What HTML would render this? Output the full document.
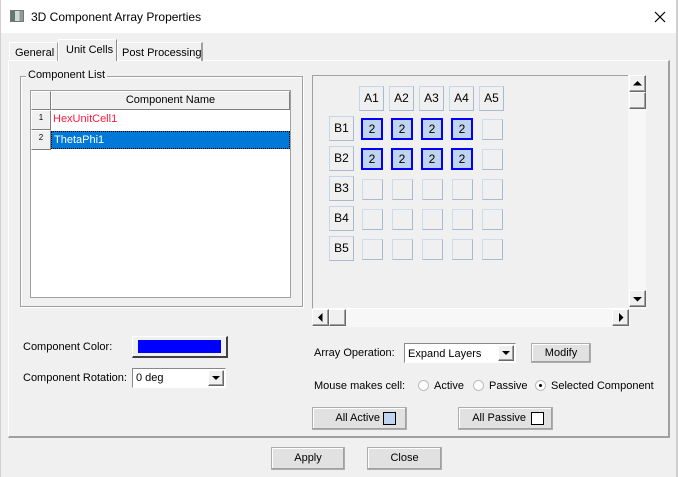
<!DOCTYPE html>
<html><head><style>
*{box-sizing:border-box;margin:0;padding:0}
body{width:678px;height:477px;background:#f0f0f0;font-family:"Liberation Sans",sans-serif;font-size:11px;color:#000;position:relative;overflow:hidden}
div{white-space:nowrap}
.a{position:absolute}
.btn{position:absolute;background:#e1e1e1;border:1px solid #adadad;text-align:center;box-shadow:inset -1px -1px 0 #a0a0a0, inset 1px 1px 0 #fff}
.hd{position:absolute;width:25px;height:25px;border:1px solid #c5d6ea;border-right-color:#a9b9cf;border-bottom-color:#a9b9cf;background:#f0f0f0;text-align:center;line-height:23px;font-size:12px}
.c2{position:absolute;width:22px;height:22px;border:2px solid #0000ff;background:#c0d4ee;text-align:center;line-height:18px;font-size:12px}
.ce{position:absolute;width:21px;height:21px;border:1px solid #cbdcef;border-right-color:#a9b9cf;border-bottom-color:#a9b9cf;background:#f0f0f0}
.radio{position:absolute;width:11px;height:11px;border-radius:50%;border:1px solid #bbb;background:#fff}
.sb{position:absolute;background:#f0f0f0;border:1px solid #fff;border-right-color:#696969;border-bottom-color:#696969;box-shadow:inset -1px -1px 0 #a0a0a0}
</style></head><body>
<div class="a" style="left:0;top:0;width:678px;height:33px;background:#fff"></div>
<div class="a" style="left:676px;top:0;width:2px;height:477px;background:#cfcfcf"></div>
<div class="a" style="left:0;top:0;width:1px;height:477px;background:#cfcfcf"></div>
<div class="a" style="left:10px;top:10px;width:14px;height:12px;border:1px solid #777;background:linear-gradient(90deg,#5f7a6a 0 35%,#cfd8d5 35% 70%,#8a9a9a 70%)"></div>
<div class="a" style="left:31px;top:10px;font-size:12px">3D Component Array Properties</div>
<svg class="a" style="left:654px;top:11px" width="12" height="12"><path d="M1 1L11 11M11 1L1 11" stroke="#000" stroke-width="1.2"/></svg>

<div class="a" style="left:8px;top:60px;width:662px;height:378px;border:1px solid #fff;border-right:2px solid #a0a0a0;border-bottom:2px solid #a0a0a0"></div>
<div class="a" style="left:9px;top:42px;width:49px;height:19px;border:1px solid #fff;border-right:1px solid #a0a0a0;border-bottom:none;padding:4px 0 0 5px">General</div>
<div class="a" style="left:58px;top:39px;width:59px;height:22px;border:1px solid #fff;border-right:1px solid #888;border-bottom:none;background:#f0f0f0;padding:4px 0 0 7px">Unit Cells</div>
<div class="a" style="left:117px;top:42px;width:86px;height:19px;border:1px solid #fff;border-right:2px solid #a0a0a0;border-bottom:none;padding:4px 0 0 4px">Post Processing</div>

<div class="a" style="left:20px;top:76px;width:283px;height:231px;border:1px solid #a0a0a0;box-shadow:1px 1px 0 #fff, inset 1px 1px 0 #fff"></div>
<div class="a" style="left:26px;top:69px;background:#f0f0f0;padding:0 2px">Component List</div>
<div class="a" style="left:30px;top:90px;width:261px;height:208px;background:#fff;border:1px solid #a0a0a0"></div>
<div class="a" style="left:31px;top:91px;width:20px;height:19px;background:#f0f0f0;border:1px solid #fff;border-right-color:#808080;border-bottom-color:#808080"></div>
<div class="a" style="left:51px;top:91px;width:239px;height:19px;background:#f0f0f0;border:1px solid #fff;border-right-color:#808080;border-bottom-color:#808080;text-align:center;line-height:17px">Component Name</div>
<div class="a" style="left:31px;top:110px;width:20px;height:20px;background:#f0f0f0;border:1px solid #fff;border-right-color:#808080;border-bottom-color:#808080;font-size:8px;text-align:center;line-height:14px">1</div>
<div class="a" style="left:31px;top:130px;width:20px;height:20px;background:#f0f0f0;border:1px solid #fff;border-right-color:#808080;border-bottom-color:#808080;font-size:8px;text-align:center;line-height:14px">2</div>
<div class="a" style="left:53px;top:113px;color:#ff1a3c">HexUnitCell1</div>
<div class="a" style="left:51px;top:131px;width:239px;height:18px;background:#0078d7;border:1px dotted #000;color:#fff;padding:2px 0 0 2px">ThetaPhi1</div>

<div class="a" style="left:312px;top:75px;width:317px;height:234px;border:1px solid #a0a0a0;border-right-color:#fff;border-bottom-color:#fff"></div>
<div class="a" style="left:628px;top:75px;width:18px;height:234px;background:#f7f7f7"></div>
<div class="sb" style="left:629px;top:75px;width:17px;height:17px"></div>
<svg class="a" style="left:633px;top:81px" width="9" height="5"><path d="M0 4.5L4.5 0L9 4.5Z"/></svg>
<div class="sb" style="left:629px;top:92px;width:17px;height:17px"></div>
<div class="sb" style="left:629px;top:290px;width:17px;height:17px"></div>
<svg class="a" style="left:633px;top:297px" width="9" height="5"><path d="M0 0L4.5 4.5L9 0Z"/></svg>
<div class="a" style="left:312px;top:309px;width:318px;height:18px;background:#f7f7f7"></div>
<div class="sb" style="left:312px;top:309px;width:17px;height:17px"></div>
<svg class="a" style="left:318px;top:313px" width="5" height="9"><path d="M4.5 0L0 4.5L4.5 9Z"/></svg>
<div class="sb" style="left:329px;top:309px;width:17px;height:17px"></div>
<div class="sb" style="left:612px;top:309px;width:17px;height:17px"></div>
<svg class="a" style="left:619px;top:313px" width="5" height="9"><path d="M0 0L4.5 4.5L0 9Z"/></svg>

<div class="hd" style="left:359px;top:86px">A1</div>
<div class="hd" style="left:389px;top:86px">A2</div>
<div class="hd" style="left:419px;top:86px">A3</div>
<div class="hd" style="left:449px;top:86px">A4</div>
<div class="hd" style="left:479px;top:86px">A5</div>
<div class="hd" style="left:329px;top:116px">B1</div>
<div class="hd" style="left:329px;top:146px">B2</div>
<div class="hd" style="left:329px;top:176px">B3</div>
<div class="hd" style="left:329px;top:206px">B4</div>
<div class="hd" style="left:329px;top:236px">B5</div>
<div class="c2" style="left:361px;top:118px">2</div><div class="c2" style="left:391px;top:118px">2</div><div class="c2" style="left:421px;top:118px">2</div><div class="c2" style="left:451px;top:118px">2</div><div class="ce" style="left:482px;top:119px"></div>
<div class="c2" style="left:361px;top:148px">2</div><div class="c2" style="left:391px;top:148px">2</div><div class="c2" style="left:421px;top:148px">2</div><div class="c2" style="left:451px;top:148px">2</div><div class="ce" style="left:482px;top:149px"></div>
<div class="ce" style="left:362px;top:179px"></div><div class="ce" style="left:392px;top:179px"></div><div class="ce" style="left:422px;top:179px"></div><div class="ce" style="left:452px;top:179px"></div><div class="ce" style="left:482px;top:179px"></div>
<div class="ce" style="left:362px;top:209px"></div><div class="ce" style="left:392px;top:209px"></div><div class="ce" style="left:422px;top:209px"></div><div class="ce" style="left:452px;top:209px"></div><div class="ce" style="left:482px;top:209px"></div>
<div class="ce" style="left:362px;top:239px"></div><div class="ce" style="left:392px;top:239px"></div><div class="ce" style="left:422px;top:239px"></div><div class="ce" style="left:452px;top:239px"></div><div class="ce" style="left:482px;top:239px"></div>

<div class="a" style="left:23px;top:341px">Component Color:</div>
<div class="a" style="left:132px;top:336px;width:96px;height:22px;background:#f0f0f0;border:1px solid #fff;border-right:2px solid #404040;border-bottom:2px solid #404040"></div>
<div class="a" style="left:138px;top:340px;width:83px;height:13px;background:#0000ff"></div>
<div class="a" style="left:23px;top:372px">Component Rotation:</div>
<div class="a" style="left:132px;top:368px;width:94px;height:20px;background:#fff;border:1px solid #888;border-right-color:#fff;border-bottom-color:#fff;padding:3px 0 0 3px">0 deg</div>
<div class="sb" style="left:208px;top:370px;width:16px;height:16px"></div>
<svg class="a" style="left:212px;top:376px" width="8" height="4"><path d="M0 0L4 4L8 0Z"/></svg>

<div class="a" style="left:314px;top:347px">Array Operation:</div>
<div class="a" style="left:404px;top:343px;width:112px;height:20px;background:#fff;border:1px solid #888;border-right-color:#fff;border-bottom-color:#fff;padding:4px 0 0 3px">Expand Layers</div>
<div class="sb" style="left:498px;top:345px;width:16px;height:16px"></div>
<svg class="a" style="left:502px;top:351px" width="8" height="4"><path d="M0 0L4 4L8 0Z"/></svg>
<div class="btn" style="left:531px;top:343px;width:60px;height:20px;line-height:18px">Modify</div>
<div class="a" style="left:314px;top:380px">Mouse makes cell:</div>
<div class="radio" style="left:418px;top:380px"></div><div class="a" style="left:434px;top:380px">Active</div>
<div class="radio" style="left:473px;top:380px"></div><div class="a" style="left:489px;top:380px">Passive</div>
<div class="radio" style="left:535px;top:380px"></div><div class="a" style="left:539px;top:384px;width:3px;height:3px;background:#000;border-radius:50%"></div>
<div class="a" style="left:551px;top:380px">Selected Component</div>
<div class="btn" style="left:312px;top:407px;width:95px;height:23px;line-height:21px;padding-right:26px;text-align:right">All Active</div>
<div class="a" style="left:383px;top:412px;width:13px;height:13px;background:#c0d4ee;border:1px solid #000"></div>
<div class="btn" style="left:458px;top:407px;width:95px;height:23px;line-height:21px;padding-right:26px;text-align:right">All Passive</div>
<div class="a" style="left:531px;top:412px;width:13px;height:13px;background:#fff;border:1px solid #000"></div>

<div class="btn" style="left:271px;top:447px;width:74px;height:23px;line-height:21px">Apply</div>
<div class="btn" style="left:367px;top:447px;width:75px;height:23px;line-height:21px">Close</div>
</body></html>
